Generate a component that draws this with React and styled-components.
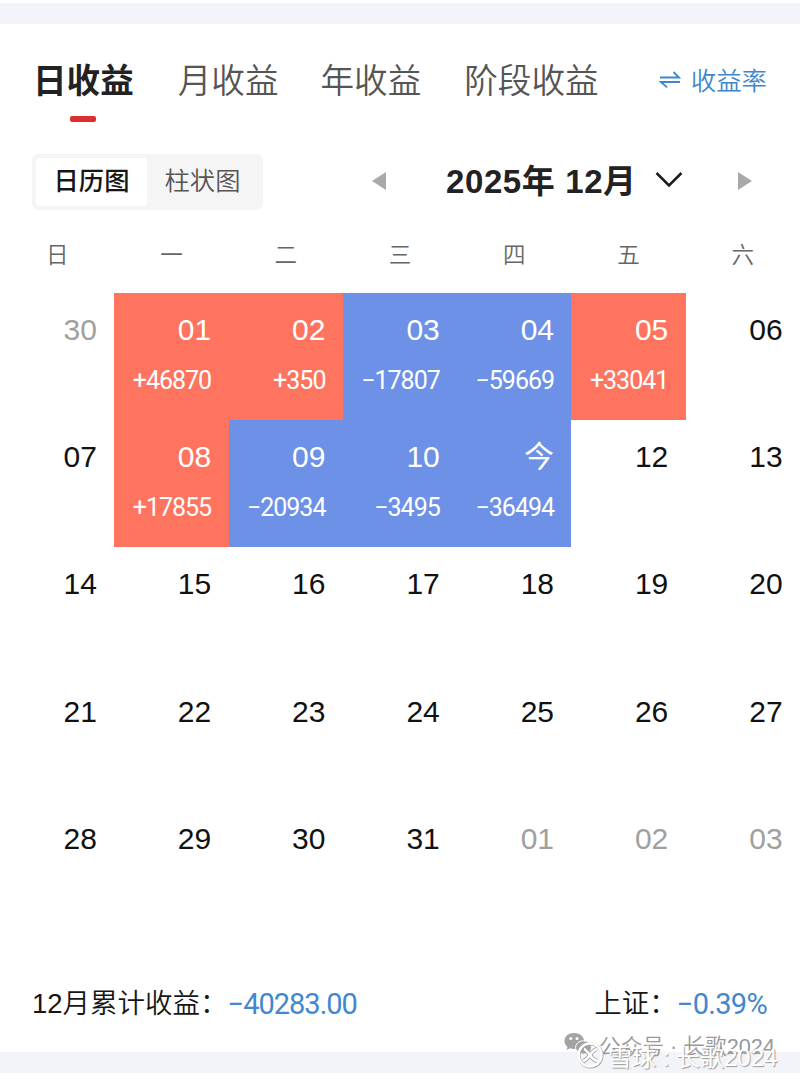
import React from "react";
import styled, { createGlobalStyle } from "styled-components";

const GlobalStyle = createGlobalStyle`
  * { box-sizing: border-box; }
  body {
    margin: 0;
    background: #fff;
    font-family: "Liberation Sans", "Noto Sans CJK SC", sans-serif;
    color: #161616;
  }
`;

const Page = styled.main`
  position: relative;
  width: 800px;
  height: 1081px;
  padding-top: 3px;
  overflow: hidden;
  background: #fff;
`;

const Band = styled.div`
  height: ${(p) => p.$height}px;
  background: #f2f4f9;
`;

const TabBar = styled.nav`
  display: flex;
  align-items: flex-start;
  height: 130px;
  padding: 31px 33px 0 33px;
`;

const Tab = styled.div`
  display: flex;
  flex-direction: column;
  align-items: center;
  margin-right: ${(p) => p.$gap}px;
  font-family: "Noto Sans CJK SC", sans-serif;
  font-size: 33.6px;
  line-height: 48px;
  white-space: nowrap;
  font-weight: ${(p) => (p.$active ? 700 : 350)};
  color: ${(p) => (p.$active ? "#222" : "#555")};
`;

const TabMark = styled.span`
  width: 26px;
  height: 6px;
  margin-top: 13px;
  border-radius: 2px;
  background: #de2d2f;
`;

const RateSwitch = styled.div`
  display: flex;
  align-items: center;
  gap: 10px;
  margin-left: auto;
  height: 48px;
  font-family: "Noto Sans CJK SC", sans-serif;
  font-size: 25.4px;
  font-weight: 350;
  white-space: nowrap;
  color: #3f87cd;
`;

const Controls = styled.div`
  display: flex;
  align-items: center;
  height: 56px;
  padding-left: 32px;
`;

const Segment = styled.div`
  display: flex;
  width: 231px;
  height: 56px;
  padding: 4px;
  border-radius: 6px;
  background: #f5f5f5;
`;

const SegmentItem = styled.div`
  width: 111px;
  border-radius: 4px;
  text-align: center;
  font-family: "Noto Sans CJK SC", sans-serif;
  font-size: 25.3px;
  line-height: 43px;
  font-weight: ${(p) => (p.$active ? 500 : 350)};
  color: ${(p) => (p.$active ? "#161616" : "#555")};
  background: ${(p) => (p.$active ? "#fff" : "transparent")};
`;

const Arrow = styled.svg`
  display: block;
  margin-left: ${(p) => p.$offset}px;
  margin-top: -2px;
`;

const MonthTitle = styled.div`
  margin-left: 60px;
  width: 190px;
  font-size: 33px;
  line-height: 48px;
  font-weight: 700;
  letter-spacing: 0.6px;
  white-space: nowrap;
  color: #222;
`;

const Weekdays = styled.div`
  display: grid;
  grid-template-columns: repeat(7, 1fr);
  height: 83px;
  font-family: "Noto Sans CJK SC", sans-serif;
  font-size: 22.5px;
  font-weight: 350;
  line-height: 86px;
  text-align: center;
  color: #666;
`;

const Calendar = styled.div`
  display: grid;
  grid-template-columns: repeat(7, 1fr);
  grid-auto-rows: 127.2px;
`;

const tones = { up: "#ff745e", down: "#6d91e6" };

const Day = styled.div`
  display: flex;
  flex-direction: column;
  align-items: flex-end;
  padding: 20px 17.4px 0 0;
  background: ${(p) => tones[p.$tone] || "transparent"};
  color: ${(p) => (p.$tone ? "#fff" : p.$muted ? "#a0a0a0" : "#111")};
`;

const DayNumber = styled.div`
  font-size: 30px;
  line-height: 34px;
`;

const Amount = styled.div`
  margin-top: 17px;
  font-family: Roboto, sans-serif;
  font-size: 25px;
  font-weight: 450;
  line-height: 34px;
  letter-spacing: -1px;
  white-space: nowrap;
`;

const Summary = styled.footer`
  display: flex;
  justify-content: space-between;
  height: 123px;
  padding: 51px 33px 0 32px;
  font-size: 27.5px;
  font-weight: 350;
  line-height: 48px;
  white-space: nowrap;
`;

const SummaryItem = styled.div`
  display: flex;
`;

const Figure = styled.span`
  font-family: Roboto, sans-serif;
  font-size: 29px;
  font-weight: 450;
  letter-spacing: ${(p) => p.$tracking}px;
  color: #4287cf;
`;

const Watermark = styled.div`
  position: absolute;
  left: ${(p) => p.$x}px;
  top: ${(p) => p.$y}px;
  display: flex;
  align-items: center;
  gap: ${(p) => p.$gap}px;
  height: 30px;
  font-size: ${(p) => p.$size}px;
  font-weight: ${(p) => (p.$light ? 400 : 350)};
  white-space: nowrap;
  color: ${(p) => (p.$light ? "#fff" : "#999")};
  text-shadow: ${(p) => (p.$light ? "1px 1px 1px #999" : "none")};
`;

const weekdays = ["日", "一", "二", "三", "四", "五", "六"];

const days = [
  { n: "30", muted: true },
  { n: "01", tone: "up", amount: "+46870" },
  { n: "02", tone: "up", amount: "+350" },
  { n: "03", tone: "down", amount: "−17807" },
  { n: "04", tone: "down", amount: "−59669" },
  { n: "05", tone: "up", amount: "+33041" },
  { n: "06" },
  { n: "07" },
  { n: "08", tone: "up", amount: "+17855" },
  { n: "09", tone: "down", amount: "−20934" },
  { n: "10", tone: "down", amount: "−3495" },
  { n: "今", tone: "down", amount: "−36494" },
  ...Array.from({ length: 20 }, (_, i) => ({ n: String(i + 12) })),
  { n: "01", muted: true },
  { n: "02", muted: true },
  { n: "03", muted: true },
];

export default function App() {
  return (
    <Page>
      <GlobalStyle />
      <Band $height={21} />
      <TabBar>
        <Tab $active $gap={44}>
          日收益
          <TabMark />
        </Tab>
        <Tab $gap={42}>月收益</Tab>
        <Tab $gap={43}>年收益</Tab>
        <Tab $gap={0}>阶段收益</Tab>
        <RateSwitch>
          <svg width="22" height="18" viewBox="0 0 22 18" fill="none" stroke="currentColor" strokeWidth="1.8">
            <path d="M1 7.500H20L14.500 2M21 12H2L8 17.300" />
          </svg>
          收益率
        </RateSwitch>
      </TabBar>
      <Controls>
        <Segment>
          <SegmentItem $active>日历图</SegmentItem>
          <SegmentItem>柱状图</SegmentItem>
        </Segment>
        <Arrow $offset={108} width="15" height="20" viewBox="0 0 15 20">
          <path d="M15 1V19L1 10Z" fill="#a9a9a9" />
        </Arrow>
        <MonthTitle>2025年 12月</MonthTitle>
        <Arrow $offset={19} width="28" height="20" viewBox="0 0 28 20" fill="none">
          <path d="M1.500 2L14 14.500L26.500 2" stroke="#1c1c1c" strokeWidth="2.500" />
        </Arrow>
        <Arrow $offset={55} width="15" height="20" viewBox="0 0 15 20">
          <path d="M0 1V19L14 10Z" fill="#a9a9a9" />
        </Arrow>
      </Controls>
      <Weekdays>
        {weekdays.map((d) => (
          <span key={d}>{d}</span>
        ))}
      </Weekdays>
      <Calendar>
        {days.map((d, i) => (
          <Day key={i} $tone={d.tone} $muted={d.muted}>
            <DayNumber>{d.n}</DayNumber>
            {d.amount && <Amount>{d.amount}</Amount>}
          </Day>
        ))}
      </Calendar>
      <Summary>
        <SummaryItem>
          12月累计收益：<Figure $tracking={-1}>−40283.00</Figure>
        </SummaryItem>
        <SummaryItem>
          上证：<Figure $tracking={-0.7}>−0.39%</Figure>
        </SummaryItem>
      </Summary>
      <Band $height={21} />
      <Watermark $x={564} $y={1029} $gap={7} $size={21.7}>
        <svg width="28" height="24" viewBox="0 0 28 24" fill="#a3a3a3">
          <path d="M10 1C4.500 1 .5 4.500 .5 9C.5 11.500 1.800 13.500 3.500 15L2.500 18L6 16.300C7.300 16.700 8.500 16.900 10 16.900C15.500 16.900 20 13.500 20 9S15.500 1 10 1Z" />
          <ellipse cx="19.500" cy="15.500" rx="8" ry="6.700" stroke="#fff" />
          <path d="M23 21L26 23.500L25 19Z" />
          <g fill="#fff">
            <circle cx="6.800" cy="6.500" r="1.500" />
            <circle cx="13" cy="6.500" r="1.500" />
          </g>
        </svg>
        公众号 · 长歌2024
      </Watermark>
      <Watermark $light $x={576} $y={1040} $gap={4} $size={24}>
        <svg width="28" height="28" viewBox="0 0 28 28" fill="none">
          <circle cx="14.500" cy="14.500" r="11.500" stroke="#999" strokeWidth="3" />
          <circle cx="14" cy="14" r="11.500" stroke="#fff" strokeWidth="2.600" />
          <path d="M8 8C12 9 15 19 21 20M21 8C15 9 13 19 7 20" stroke="#999" strokeWidth="4" />
          <path d="M8 8C12 9 15 19 21 20M21 8C15 9 13 19 7 20" stroke="#fff" strokeWidth="2.600" />
        </svg>
        雪球 : 长歌2024
      </Watermark>
    </Page>
  );
}
